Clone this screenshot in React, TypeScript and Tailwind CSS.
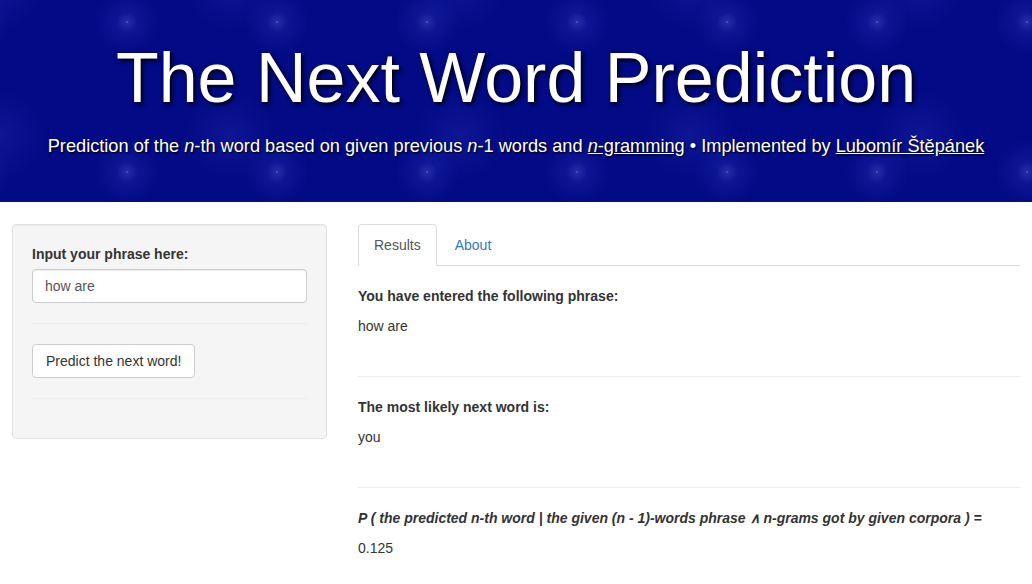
import React from "react";

const Header = () => {
  return (
    <div className="h-[202px] w-full bg-[#020a85] bg-[radial-gradient(circle_at_75px_75px,rgba(150,160,250,0.6)_0px,rgba(110,120,235,0.3)_1.5px,rgba(60,70,210,0.2)_10px,rgba(20,30,160,0)_32px),radial-gradient(circle_at_115px_75px,rgba(60,70,210,0.2)_0px,rgba(20,30,160,0)_45px)] bg-[length:150px_150px,230px_150px] bg-[position:52px_-53px,-115px_60px] text-white">
      <div className="flex flex-col items-center pt-[43px]">
        <h1 className="text-[70px] leading-[70px] font-normal [text-shadow:2px_2px_4px_#000]">
          The Next Word Prediction
        </h1>
        <p className="mt-[23px] text-[18.2px] leading-[20px] [text-shadow:1px_1px_2px_#000]">
          Prediction of the <i>n</i>-th word based on given previous <i>n</i>-1 words
          and{" "}
          <a className="underline">
            <i>n</i>-gramming
          </a>{" "}
          • Implemented by <a className="underline">Lubomír Štěpánek</a>
        </p>
      </div>
    </div>
  );
};

const Sidebar = () => {
  return (
    <div className="w-[315px] shrink-0 rounded border border-[#e3e3e3] bg-[#f5f5f5] p-[19px] shadow-[inset_0_1px_1px_rgba(0,0,0,0.05)]">
      <label className="mb-[5px] block font-bold leading-5">
        Input your phrase here:
      </label>
      <div className="h-[34px] w-full rounded border border-[#ccc] bg-white px-3 py-1.5 leading-5 text-[#555] shadow-[inset_0_1px_1px_rgba(0,0,0,0.075)]">
        how are
      </div>
      <hr className="my-5 border-t border-[#eee]" />
      <button className="h-[34px] rounded border border-[#ccc] bg-white px-[13px] py-1.5 leading-5 text-[#333]">
        Predict the next word!
      </button>
      <hr className="mt-5 mb-5 border-t border-[#eee]" />
    </div>
  );
};

const Results = () => {
  return (
    <div className="flex-1">
      <div className="flex h-[42px] border-b border-[#ddd]">
        <div className="h-[42px] rounded-t border border-[#ddd] border-b-white bg-white px-[15px] py-2.5 leading-5 text-[#555]">
          Results
        </div>
        <div className="ml-0.5 border border-transparent px-[15px] py-2.5 leading-5 text-[#337ab7]">
          About
        </div>
      </div>
      <div className="pt-5">
        <p className="font-bold leading-5">You have entered the following phrase:</p>
        <p className="mt-2.5 leading-5">how are</p>
        <hr className="mt-10 mb-5 border-t border-[#eee]" />
        <p className="font-bold leading-5">The most likely next word is:</p>
        <p className="mt-2.5 leading-5">you</p>
        <hr className="mt-10 mb-5 border-t border-[#eee]" />
        <p className="font-bold italic leading-5">
          P ( the predicted n-th word | the given (n - 1)-words phrase ∧ n-grams
          got by given corpora ) =
        </p>
        <p className="mt-2.5 leading-5">0.125</p>
      </div>
    </div>
  );
};

export default function App() {
  return (
    <div className="min-h-screen bg-white font-['Liberation_Sans',Arial,sans-serif] text-sm text-[#333]">
      <Header />
      <div className="flex items-start gap-[31px] pt-[22px] pr-3 pl-3">
        <Sidebar />
        <Results />
      </div>
    </div>
  );
}
